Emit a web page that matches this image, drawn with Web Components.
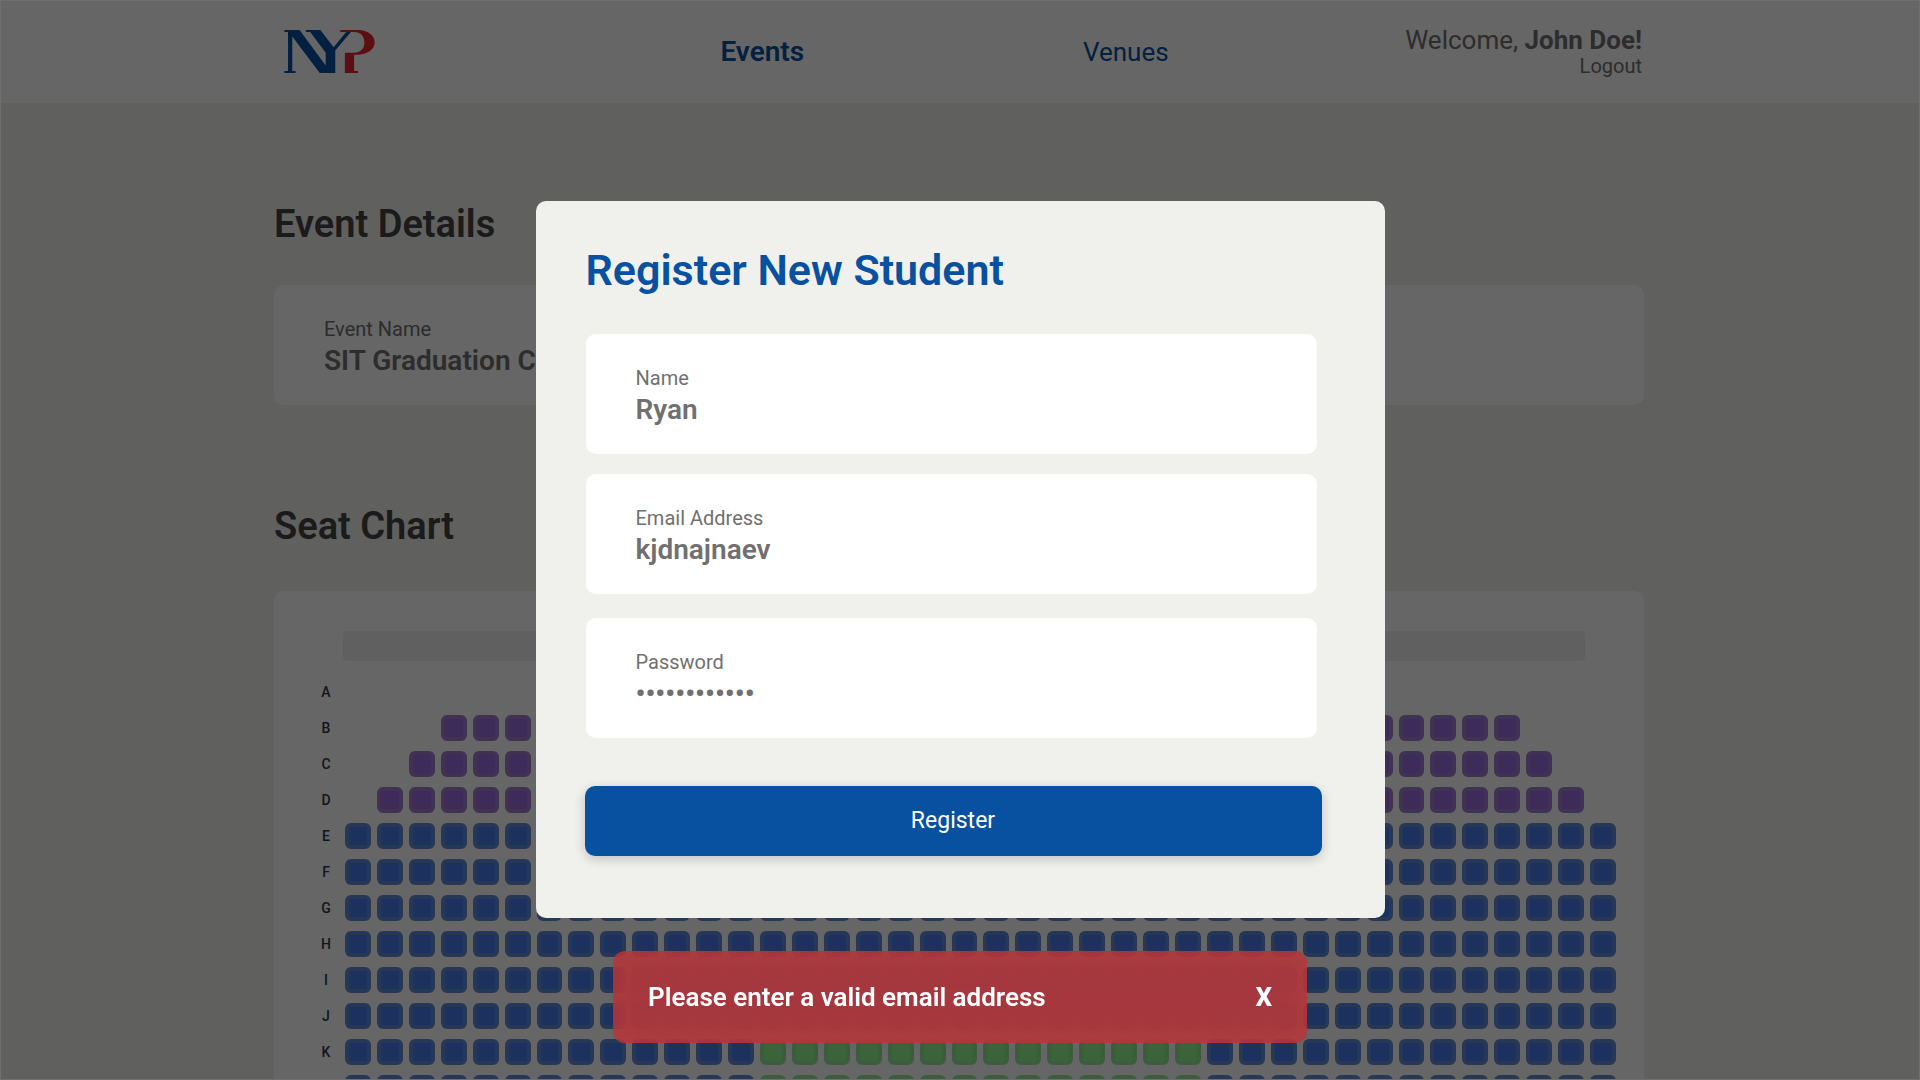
<!DOCTYPE html>
<html lang="en">
<head>
<meta charset="utf-8">
<meta name="viewport" content="width=device-width, initial-scale=1">
<title>NYP Events</title>
<style>
  :root {
    --blue: #0850a0;
    --grey: #707070;
    --paper: #f0f1ec;
    --side: 274px;
  }
  * { box-sizing: border-box; }
  body {
    margin: 0;
    height: 100vh;
    overflow: hidden;
    background: var(--paper);
    color: var(--grey);
    font-family: Roboto, "Liberation Sans", sans-serif;
  }
  main { padding: 99px 276px 60px var(--side); display: flex; flex-direction: column; gap: 99px; }
  .seats { --heading-gap: 43px; }
</style>
</head>
<body>
<site-header></site-header>
<main>
  <page-section heading="Event Details">
    <info-card label="Event Name">SIT Graduation Ceremony</info-card>
  </page-section>
  <page-section class="seats" heading="Seat Chart">
    <seat-chart></seat-chart>
  </page-section>
</main>
<modal-overlay>
  <register-dialog heading="Register New Student">
    <text-field label="Name" type="text" value="Ryan"></text-field>
    <text-field label="Email Address" type="text" value="kjdnajnaev"></text-field>
    <text-field label="Password" type="password" value="abcdefghijkl"></text-field>
  </register-dialog>
  <toast-message>Please enter a valid email address</toast-message>
</modal-overlay>

<script>
const define = (name, render) => customElements.define(name, class extends HTMLElement {
  connectedCallback() {
    if (this.shadowRoot) return;
    this.attachShadow({ mode: "open" }).innerHTML =
      "<style>*{box-sizing:border-box}:host{display:block;box-sizing:border-box}</style>" + render(this);
  }
});

define("nyp-logo", () => `
  <style>svg { display: block; width: 91px; height: 43px; }</style>
  <svg viewBox="0 0 273 130" role="img" aria-label="NYP">
    <path fill="#0850a0" d="M0 0H46L125 107V69L78 6H65V0H109L149 52L187 6H201L154 62V130H107L24 20V124H34V130H0V124H11V6H0Z"/>
    <path fill="#e6262d" d="M169 0H222C254 1 273 17 273 37C273 59 252 74 220 75H211V124H223V130H183V69H212C232 68 242 55 242 38C242 19 231 7 212 6H169Z"/>
  </svg>`);

define("site-header", () => `
  <style>
    header { display: grid; grid-template-columns: 307fr 364fr 364fr 335fr; align-items: center;
      height: 103px; padding: 0 278px 0 var(--side); background: #fff; }
    nav { display: contents; }
    a { color: var(--blue); text-decoration: none; }
    nav a { font-size: 26px; line-height: 32px; justify-self: center; }
    nav a[aria-current] { font-size: 28px; font-weight: 600; }
    nyp-logo { padding-left: 10px; }
    .user { text-align: right; font-size: 26px; line-height: 28px; white-space: nowrap; }
    .user a { display: block; color: inherit; font-size: 20px; line-height: 24px; }
  </style>
  <header>
    <nyp-logo></nyp-logo>
    <nav><a href="#events" aria-current="page">Events</a><a href="#venues">Venues</a></nav>
    <div class="user">Welcome, <b>John Doe!</b><a href="#logout">Logout</a></div>
  </header>`);

define("page-section", el => `
  <style>
    h2 { margin: 0 0 var(--heading-gap, 39px); font-size: 38px; line-height: 44px; font-weight: 600; color: #444; }
  </style>
  <h2>${el.getAttribute("heading")}</h2><slot></slot>`);

define("info-card", el => `
  <style>
    :host { background: #fff; border-radius: 10px; padding: 32px 50px 28px; }
    .label { font-size: 20px; line-height: 24px; margin-bottom: 4px; }
    .value { font-size: 28px; line-height: 32px; font-weight: 600; }
  </style>
  <div class="label">${el.getAttribute("label")}</div>
  <div class="value"><slot></slot></div>`);

define("seat-chart", () => {
  const columns = 40;
  const rows = [..."ABCDEFGHIJKL"].map((letter, r) => {
    const inset = r < 4 ? 4 - r : 0;
    let seats = "";
    if (r > 0) for (let c = inset; c < columns - inset; c++) {
      const kind = r < 4 ? "purple" : r >= 10 && c >= 13 && c <= 26 ? "green" : "blue";
      const start = c === inset ? ` style="grid-column-start:${c + 1}"` : "";
      seats += `<button type="button" class="${kind}" aria-label="Seat ${letter}${c + 1}"${start}></button>`;
    }
    return `<div class="row"><span>${letter}</span><div class="line">${seats}</div></div>`;
  }).join("");
  return `
  <style>
    :host { background: #fff; border-radius: 10px; padding: 40px 28px 40px 46px; }
    .stage { height: 30px; margin: 0 31px 18px 23px; border-radius: 4px; background: #f1f1f1; }
    .rows { display: flex; flex-direction: column; gap: 10px; }
    .row { display: flex; gap: 13px; align-items: center; height: 26px; }
    .row span { width: 12px; text-align: center; font-size: 14px; line-height: 16px; font-weight: 500; color: #2e384d; }
    .line { flex: 1; display: grid; grid-template-columns: repeat(${columns}, 1fr); column-gap: 6px; }
    button { height: 26px; padding: 0; border: 4px solid; border-radius: 6px; }
    .purple { background: #996de0; border-color: #9d7dce; }
    .blue { background: #4a7cec; border-color: #6289d8; }
    .green { background: #94fa94; border-color: #98e39a; }
  </style>
  <div class="stage"></div><div class="rows">${rows}</div>`;
});

define("modal-overlay", () => `
  <style>
    :host { position: fixed; inset: 0; display: flex; flex-direction: column; align-items: center; gap: 33px;
      padding-top: 200px; background: rgba(0,0,0,.6); border: 1px solid #707070; }
  </style>
  <slot></slot>`);

define("register-dialog", el => `
  <style>
    :host { width: 849px; max-width: 100%; padding: 45px 63px 62px 49px; background: var(--paper); border-radius: 10px; }
    h1 { margin: 0 0 40px 1px; font-size: 43px; line-height: 48px; font-weight: 600; color: var(--blue); }
    .fields { display: flex; flex-direction: column; gap: 20px; margin: 0 5px 48px 1px; }
    ::slotted(:last-child) { margin-top: 4px; }
    button { display: block; width: 100%; height: 70px; border: 0; border-radius: 10px; background: var(--blue);
      color: #fff; font: 23px/28px Roboto, "Liberation Sans", sans-serif; box-shadow: 0 3px 12px rgba(0,0,0,.2); }
  </style>
  <form role="dialog" aria-labelledby="title" onsubmit="return false">
    <h1 id="title">${el.getAttribute("heading")}</h1>
    <div class="fields"><slot></slot></div>
    <button type="submit">Register</button>
  </form>`);

define("text-field", el => `
  <style>
    :host { background: #fff; border-radius: 10px; padding: 32px 50px 28px; }
    label { display: block; font-size: 20px; line-height: 24px; margin-bottom: 4px; }
    input { display: block; width: 100%; height: 32px; padding: 0; border: 0; outline: 0; background: none;
      color: inherit; font-family: inherit; font-size: 28px; line-height: 32px; font-weight: 600; }
  </style>
  <label for="field">${el.getAttribute("label")}</label>
  <input id="field" type="${el.getAttribute("type")}" value="${el.getAttribute("value")}">`);

define("toast-message", () => `
  <style>
    :host { display: flex; align-items: center; justify-content: space-between; width: 694px; max-width: 100%;
      height: 92px; padding: 0 35px; border-radius: 12px; background: rgba(200,50,51,.75);
      backdrop-filter: blur(15px); color: #fff; font-size: 26px; line-height: 32px; font-weight: 600; }
    button { padding: 0; border: 0; background: none; color: inherit; font: inherit; font-weight: 800; }
  </style>
  <span role="alert"><slot></slot></span><button type="button">X</button>`);
</script>
</body>
</html>
